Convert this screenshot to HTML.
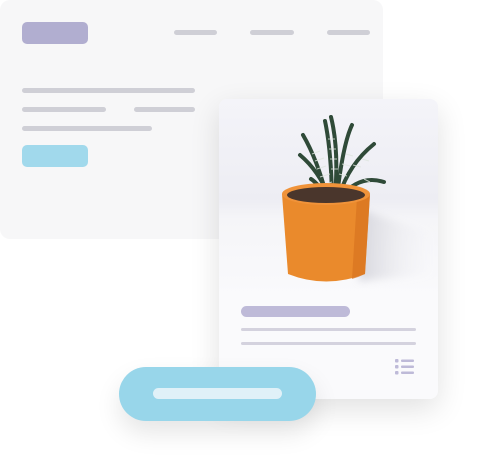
<!DOCTYPE html>
<html><head><style>
body{margin:0;width:480px;height:468px;background:#fff;position:relative;overflow:hidden;font-family:"Liberation Sans",sans-serif}
div{position:absolute}
.b{border-radius:3px}
</style></head><body>
<div style="left:0;top:0;width:383px;height:239px;background:#f7f7f8;border-radius:10px"></div>
<div style="left:22px;top:22px;width:66px;height:22px;background:#b1aed0;border-radius:5px"></div>
<div class="b" style="left:174px;top:30px;width:43px;height:5px;background:#cfcfd6"></div>
<div class="b" style="left:250px;top:30px;width:44px;height:5px;background:#cfcfd6"></div>
<div class="b" style="left:327px;top:30px;width:43px;height:5px;background:#cfcfd6"></div>
<div class="b" style="left:22px;top:88px;width:173px;height:5px;background:#cfcfd6"></div>
<div class="b" style="left:22px;top:107px;width:84px;height:5px;background:#cfcfd6"></div>
<div class="b" style="left:134px;top:107px;width:61px;height:5px;background:#cfcfd6"></div>
<div class="b" style="left:22px;top:126px;width:130px;height:5px;background:#cfcfd6"></div>
<div style="left:22px;top:145px;width:66px;height:22px;background:#a1d9ec;border-radius:5px"></div>

<div style="left:219px;top:99px;width:219px;height:300px;background:#fafafc;border-radius:8px;box-shadow:0 10px 30px rgba(0,0,0,0.12);overflow:hidden">
 <div style="left:0;top:0;width:219px;height:200px;background:linear-gradient(#f4f4f9,#ededf3 50%,#f5f5f8 60%,#fafafc)"></div>
 <svg style="position:absolute;left:0;top:0" width="219" height="200">
  <defs><linearGradient id="sh" x1="0" x2="1"><stop offset="0" stop-color="#c8c8d0"/><stop offset="1" stop-color="#f0f0f5" stop-opacity="0"/></linearGradient>
  <filter id="bl"><feGaussianBlur stdDeviation="4"/></filter></defs>
  <path d="M140 110 L215 135 L215 175 L140 182 Z" fill="url(#sh)" opacity=".7" filter="url(#bl)"/>
  <g stroke="#2f4a38" stroke-width="4" stroke-linecap="round" fill="none">
   <path d="M108 98 Q98 60 84 36"/>
   <path d="M110 98 Q100 72 81 56"/>
   <path d="M113 97 Q112 50 106 22"/>
   <path d="M116 97 Q120 50 112 18"/>
   <path d="M118 97 Q124 45 133 26"/>
   <path d="M120 97 Q130 65 155 45"/>
   <path d="M121 99 Q140 75 165 83"/>
   <path d="M108 100 Q100 85 92 80"/>
  </g>
  <g stroke="#dfe6df" stroke-width="1" opacity=".8">
   <path d="M93 55 l8 -3 M96 62 l9 -3 M98 70 l9 -3 M101 78 l10 -3 M103 86 l10 -3 M109 40 l7 0 M110 50 l7 0 M111 60 l7 0 M112 70 l7 0 M120 75 l8 2 M123 65 l8 2 M127 55 l7 2 M134 66 l8 2 M143 60 l7 2 M145 80 l6 3"/>
  </g>
  <path d="M63 95 L151 95 L146 175 Q107 190 69 175 Z" fill="#ea8a2c"/>
  <path d="M138 98 L151 95 L146 175 Q140 178 133 180 Z" fill="#d7741f" opacity=".7"/>
  <ellipse cx="107" cy="95" rx="44" ry="11" fill="#f0933a"/>
  <ellipse cx="107" cy="96" rx="39" ry="8" fill="#4a362c"/>
 </svg>
 <div style="left:22px;top:207px;width:109px;height:11px;background:#bebad8;border-radius:6px"></div>
 <div style="left:22px;top:229px;width:175px;height:3px;background:#d4d2de;border-radius:2px"></div>
 <div style="left:22px;top:243px;width:175px;height:3px;background:#d4d2de;border-radius:2px"></div>
 <svg style="position:absolute;left:176px;top:260px" width="22" height="18">
  <g fill="#bebad8"><rect x="0" y="0" width="3.5" height="3.5" rx="1"/><rect x="0" y="6" width="3.5" height="3.5" rx="1"/><rect x="0" y="12" width="3.5" height="3.5" rx="1"/>
  <rect x="6" y="0.5" width="13" height="2.5" rx="1"/><rect x="6" y="6.5" width="13" height="2.5" rx="1"/><rect x="6" y="12.5" width="13" height="2.5" rx="1"/></g>
 </svg>
</div>

<div style="left:119px;top:367px;width:197px;height:54px;background:#98d6ea;border-radius:27px;box-shadow:0 12px 25px rgba(0,0,0,0.1)"></div>
<div style="left:153px;top:388px;width:129px;height:11px;background:#e0f1f8;border-radius:6px"></div>
</body></html>
